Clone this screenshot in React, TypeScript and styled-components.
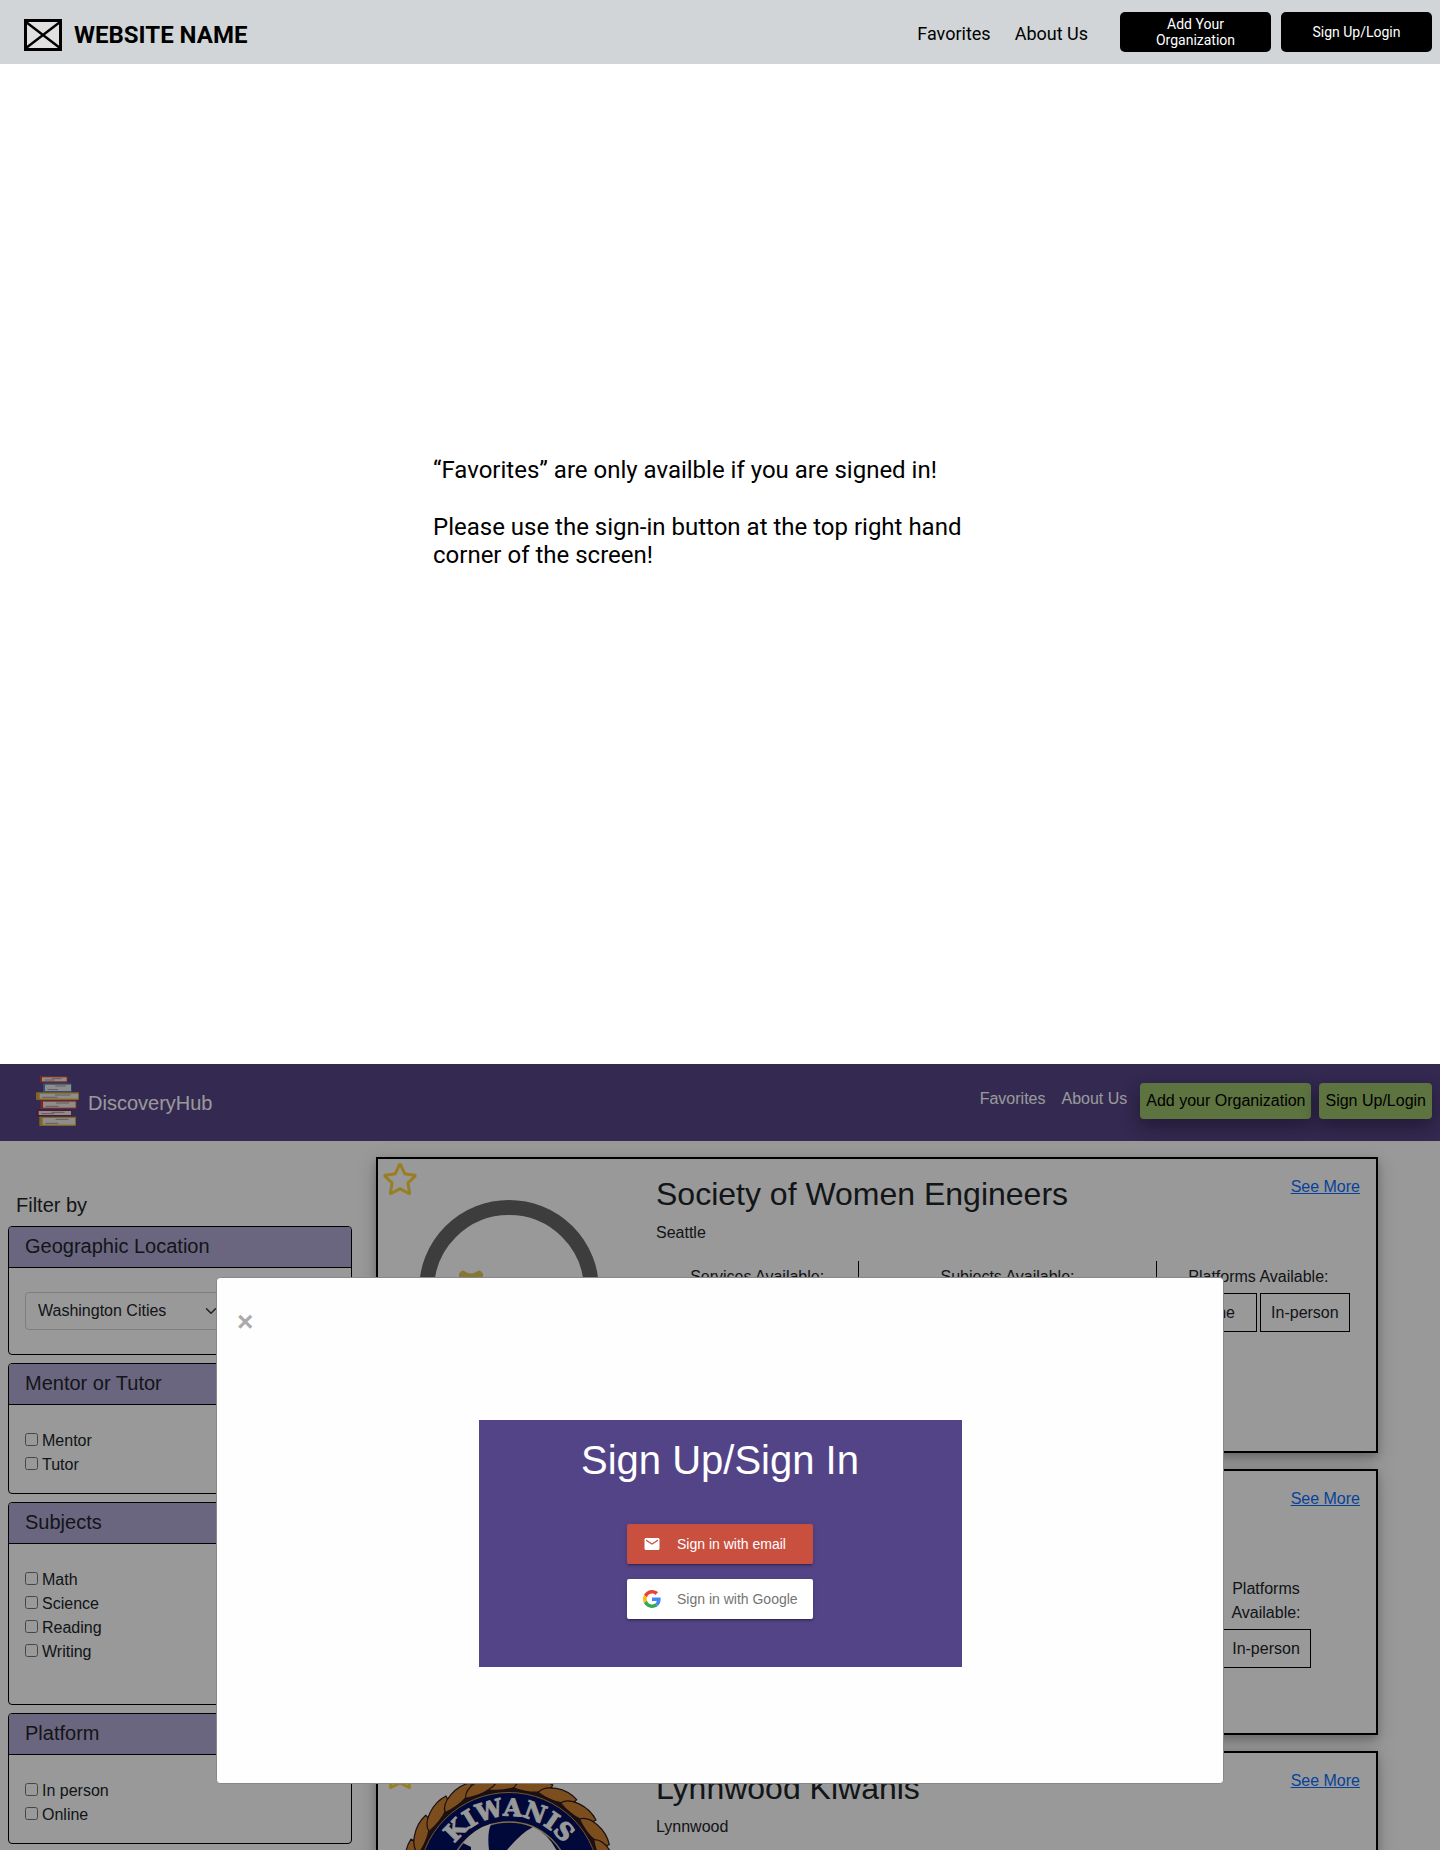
import React from "react";
import styled, { createGlobalStyle } from "styled-components";
import { FaRegStar } from "react-icons/fa";
import { MdEmail } from "react-icons/md";

const GlobalStyle = createGlobalStyle`
  *, *::before, *::after { box-sizing: border-box; }
  body { margin: 0; background: #fff; }
  h1, h2, h3, p { margin: 0; font-weight: 400; }
  button, select { font-family: inherit; }
`;

const Page = styled.div`
  display: flex;
  flex-direction: column;
  min-height: 100vh;
`;

/* ---------- Wireframe: signed-out favorites ---------- */

const Wireframe = styled.section`
  font-family: Roboto, "Liberation Sans", sans-serif;
  color: #000;
`;

const WireHeader = styled.header`
  display: flex;
  align-items: center;
  justify-content: space-between;
  height: 64px;
  padding: 0 8px 0 24px;
  background: #d1d5d7;
`;

const WireBrand = styled.div`
  display: flex;
  align-items: center;
  gap: 12px;
  padding-top: 6px;
  font-size: 24px;
  line-height: 32px;
  font-weight: 700;
`;

const WireNav = styled.nav`
  display: flex;
  align-items: center;
  gap: 24px;
`;

const WireLink = styled.a`
  padding-top: 4px;
  font-size: 18px;
  line-height: 20px;
  color: #000;
  text-decoration: none;
`;

const WireButtons = styled.div`
  display: flex;
  gap: 10px;
  margin-left: 8px;
`;

const WireButton = styled.button`
  width: 151px;
  height: 40px;
  padding: 0 24px;
  border: 0;
  border-radius: 5px;
  background: #000;
  color: #fff;
  font-size: 14px;
  line-height: 16px;
`;

const Notice = styled.div`
  display: flex;
  flex-direction: column;
  gap: 29px;
  max-width: 574px;
  margin: 0 auto;
  padding: 392px 0 495px;
  font-size: 24px;
  line-height: 28px;
`;

/* ---------- DiscoveryHub ---------- */

const Hub = styled.section`
  position: relative;
  flex: 1 0 786px;
  height: 786px;
  overflow: hidden;
  background: #fff;
  color: #212529;
  font-family: "Liberation Sans", Arial, sans-serif;
  font-size: 16px;
  line-height: 24px;
`;

const HubHeader = styled.header`
  display: flex;
  align-items: center;
  justify-content: space-between;
  height: 77px;
  padding: 0 8px 4px 36px;
  background: #564587;
`;

const HubBrand = styled.div`
  display: flex;
  align-items: center;
  gap: 9px;
  color: #fff;
  font-size: 20px;
  line-height: 30px;
`;

const HubName = styled.span`
  padding-top: 4px;
`;

const HubNav = styled.nav`
  display: flex;
  align-items: flex-start;
  gap: 16px;
`;

const HubLink = styled.a`
  padding-top: 4px;
  color: #fff;
  text-decoration: none;
`;

const HubButtons = styled.div`
  display: flex;
  gap: 8px;
  margin-left: -3px;
`;

const HubButton = styled.button`
  padding: 6px;
  border: 0;
  border-radius: 4px;
  background: #9bc06b;
  color: #000;
  font-size: 16px;
  line-height: 24px;
  box-shadow: 0 8px 16px rgba(0, 0, 0, 0.2), 0 6px 20px rgba(0, 0, 0, 0.19);
`;

const Columns = styled.div`
  display: grid;
  grid-template-columns: 1fr 3fr;
`;

const Sidebar = styled.aside`
  display: flex;
  flex-direction: column;
  gap: 8px;
  padding: 51px 8px 0;
`;

const SidebarTitle = styled.h2`
  padding: 0 8px;
  font-size: 20px;
  line-height: 26px;
`;

const Panel = styled.section`
  border: 1px solid #000;
  border-radius: 4px;
  overflow: hidden;
`;

const PanelTitle = styled.h3`
  padding: 7px 16px 9px;
  border-bottom: 1px solid #000;
  background: #b2aad5;
  font-size: 20px;
  line-height: 24px;
`;

const PanelBody = styled.div<{ $bottom: number }>`
  padding: 24px 16px ${(p) => p.$bottom}px;
`;

const CheckLabel = styled.label`
  display: block;

  input {
    width: 13px;
    height: 13px;
    margin: 0 4px 0 0;
  }
`;

const CitySelect = styled.select`
  display: block;
  width: 207px;
  height: 38px;
  padding: 6px 36px 6px 12px;
  appearance: none;
  border: 1px solid #ced4da;
  border-radius: 4px;
  background: #fff
    url("data:image/svg+xml,%3Csvg xmlns='http://www.w3.org/2000/svg' viewBox='0 0 16 16'%3E%3Cpath fill='none' stroke='%23343a40' stroke-linecap='round' stroke-linejoin='round' stroke-width='2' d='M2 5l6 6 6-6'/%3E%3C/svg%3E")
    no-repeat right 12px center / 16px 12px;
  color: #212529;
  font-size: 16px;
  line-height: 24px;
`;

const Results = styled.main`
  display: flex;
  flex-direction: column;
  gap: 16px;
  padding: 16px 62px 16px 16px;
`;

const Card = styled.article<{ $height: number }>`
  position: relative;
  display: flex;
  min-height: ${(p) => p.$height}px;
  border: 2px solid #000;
  background: #fff;
  box-shadow: 0 4px 8px rgba(0, 0, 0, 0.2), 0 6px 20px rgba(0, 0, 0, 0.19);
`;

const FavoriteButton = styled.button`
  position: absolute;
  top: 2px;
  left: 4px;
  display: flex;
  padding: 0;
  border: 0;
  background: none;
  color: #ffd43b;
  font-size: 36px;
`;

const LogoColumn = styled.div<{ $top: number }>`
  display: flex;
  flex: 0 0 278px;
  justify-content: center;
  align-items: flex-start;
  padding: ${(p) => p.$top}px 16px 0 0;
`;

const Details = styled.div`
  flex: 1;
  padding: 16px 16px 16px 0;
`;

const CardTop = styled.div`
  display: flex;
  align-items: flex-start;
  justify-content: space-between;
  margin-bottom: 8px;
`;

const CardTitle = styled.h2`
  font-size: 32px;
  line-height: 38px;
`;

const MoreLink = styled.a`
  color: #0d6efd;
`;

const Facts = styled.div<{ $compact: boolean }>`
  display: grid;
  grid-template-columns: ${(p) =>
    p.$compact ? "41fr 60fr 100px" : "41fr 60fr 41fr"};
  margin-top: 16px;
  padding-right: ${(p) => (p.$compact ? 44 : 0)}px;
`;

const Fact = styled.div`
  display: flex;
  flex-direction: column;
  align-items: center;
  gap: 4px;
  padding: 4px 0 2px;
  text-align: center;

  &:not(:last-child) {
    border-right: 1px solid #000;
  }
`;

const Tags = styled.div`
  display: flex;
  gap: 3px;
`;

const Tag = styled.span`
  width: 90px;
  padding: 7px 0 6px;
  border: 1px solid #000;
`;

const Overlay = styled.div`
  position: absolute;
  inset: 0;
  padding-top: 213px;
  background: rgba(0, 0, 0, 0.4);
`;

const Modal = styled.div`
  width: 70%;
  margin: 0 auto;
  padding: 20px 20px 116px;
  border: 1px solid #888;
  border-radius: 4px;
  background: #fefefe;
`;

const CloseButton = styled.button`
  display: block;
  margin-bottom: 74px;
  padding: 0;
  border: 0;
  background: none;
  color: #aaa;
  font-size: 28px;
  line-height: 48px;
  font-weight: 700;
`;

const SignInBox = styled.div`
  display: flex;
  flex-direction: column;
  align-items: center;
  gap: 40px;
  width: 50%;
  margin: 0 auto;
  padding: 16px 16px 48px;
  background: #534487;
  color: #fff;
`;

const SignInTitle = styled.h1`
  font-size: 40px;
  line-height: 48px;
`;

const Providers = styled.div`
  display: flex;
  flex-direction: column;
  gap: 15px;
`;

const ProviderButton = styled.button<{ $bg: string; $color: string }>`
  display: flex;
  align-items: center;
  gap: 16px;
  width: 186px;
  height: 40px;
  padding: 0 16px;
  border: 0;
  border-radius: 2px;
  background: ${(p) => p.$bg};
  color: ${(p) => p.$color};
  font-size: 14px;
  line-height: 16px;
  font-weight: 500;
  white-space: nowrap;
  box-shadow: 0 2px 2px rgba(0, 0, 0, 0.14), 0 3px 1px -2px rgba(0, 0, 0, 0.2),
    0 1px 5px rgba(0, 0, 0, 0.12);

  svg {
    flex: none;
  }
`;

/* ---------- Drawings ---------- */

const PlaceholderLogo = () => (
  <svg width="38" height="32" viewBox="0 0 38 32" aria-hidden="true">
    <rect x="1.5" y="1.5" width="35" height="29" fill="#e0e0e0" stroke="#000" strokeWidth="3" />
    <path d="M2 3L36 29M36 3L2 29" stroke="#000" strokeWidth="2.4" />
  </svg>
);

const books = [
  { x: 12, y: 0, w: 83, h: 20, c: "#c8443c", px: 18, pw: 74 },
  { x: 21, y: 22, w: 86, h: 27, c: "#4c86c0", px: 27, pw: 78 },
  { x: 0, y: 49, w: 129, h: 23, c: "#d8ab38", px: 11, pw: 115 },
  { x: 13, y: 73, w: 109, h: 26, c: "#c8443c", px: 21, pw: 98 },
  { x: 0, y: 101, w: 106, h: 20, c: "#77305f", px: 8, pw: 97 },
  { x: 10, y: 122, w: 110, h: 28, c: "#d8ab38", px: 20, pw: 97 },
];

const BooksLogo = () => (
  <svg width="43" height="50" viewBox="0 0 129 150" aria-hidden="true">
    {books.map((b) => (
      <g key={b.y}>
        <rect x={b.x} y={b.y} width={b.w} height={b.h} rx="2" fill={b.c} />
        <rect x={b.px} y={b.y + 4} width={b.pw} height={b.h - 8} fill="#efece8" />
        <path
          d={`M${b.px + 8} ${b.y + b.h - 8}h${b.pw * 0.4}M${b.px + b.pw * 0.4} ${b.y + 8}h${b.pw * 0.4}`}
          stroke="#96828f"
          strokeWidth="2.4"
        />
      </g>
    ))}
  </svg>
);

const EngineersLogo = () => (
  <svg width="180" height="180" viewBox="0 0 180 180" role="img" aria-label="Society of Women Engineers logo">
    <circle cx="90" cy="90" r="82.5" fill="none" stroke="#666" strokeWidth="15" />
    <path d="M44 75q8 5 16 0M44 75l16 16M60 75l-16 16" stroke="#dfc75c" strokeWidth="8" strokeLinecap="round" fill="none" />
  </svg>
);

const ropeStrands = Array.from({ length: 24 }, (_, i) => i * 15);

const KiwanisSeal = () => (
  <svg width="218" height="218" viewBox="-109 -109 218 218" role="img" aria-label="Kiwanis seal">
    <circle r="105" fill="#2c1e2c" />
    {ropeStrands.map((a) => (
      <path
        key={a}
        transform={`rotate(${a})`}
        d="M-20 -93C-18 -104 2 -111 17 -106C16 -98 0 -91 -20 -93Z"
        fill="#cf8331"
        stroke="#2c1a20"
        strokeWidth="1.2"
      />
    ))}
    <circle r="92" fill="#000f62" stroke="#2c1a20" strokeWidth="3" />
    <circle r="90.5" fill="none" stroke="#c09058" strokeWidth="1" />
    <circle r="61" fill="#000f62" stroke="#d8b878" strokeWidth="1.4" />
    <path
      d="M-46 -40Q-34 -55 -18 -59Q-22 -50 -20 -33V45H-38V-36ZM24 -56Q12 -50 -2 -33L-12 -12L18 45H46L14 -14L28 -30H49Q40 -49 24 -56Z"
      fill="#fff"
    />
    <path id="seal-arc" d="M-67 0A67 67 0 0 1 67 0" fill="none" />
    <text
      fill="#fff"
      stroke="#fff"
      strokeWidth="1"
      fontFamily="'DejaVu Serif', serif"
      fontWeight="700"
      fontSize="24"
      textAnchor="middle"
    >
      <textPath href="#seal-arc" startOffset="50%">
        KIWANIS
      </textPath>
    </text>
  </svg>
);

const GoogleLogo = () => (
  <svg width="18" height="18" viewBox="0 0 48 48" aria-hidden="true">
    <path fill="#EA4335" d="M24 9.5c3.54 0 6.71 1.22 9.21 3.6l6.85-6.85C35.9 2.38 30.47 0 24 0 14.62 0 6.51 5.38 2.56 13.22l7.98 6.19C12.43 13.72 17.74 9.5 24 9.5z" />
    <path fill="#4285F4" d="M46.98 24.55c0-1.57-.15-3.09-.38-4.55H24v9.02h12.94c-.58 2.96-2.26 5.48-4.78 7.18l7.73 6c4.51-4.18 7.09-10.36 7.09-17.65z" />
    <path fill="#FBBC05" d="M10.53 28.59c-.48-1.45-.76-2.99-.76-4.59s.27-3.14.76-4.59l-7.98-6.19C.92 16.46 0 20.12 0 24c0 3.88.92 7.54 2.56 10.78l7.97-6.19z" />
    <path fill="#34A853" d="M24 48c6.48 0 11.93-2.13 15.89-5.81l-7.73-6c-2.15 1.45-4.92 2.3-8.16 2.3-6.26 0-11.57-4.22-13.47-9.91l-7.98 6.19C6.51 42.62 14.62 48 24 48z" />
  </svg>
);

/* ---------- Content ---------- */

const filters = [
  { title: "Mentor or Tutor", options: ["Mentor", "Tutor"], bottom: 16 },
  { title: "Subjects", options: ["Math", "Science", "Reading", "Writing"], bottom: 40 },
  { title: "Platform", options: ["In person", "Online"], bottom: 16 },
];

interface Organization {
  name: string;
  city: string;
  height: number;
  logoTop: number;
  logo?: React.ReactNode;
  compact?: boolean;
  platforms?: string[];
}

const organizations: Organization[] = [
  {
    name: "Society of Women Engineers",
    city: "Seattle",
    height: 296,
    logoTop: 41,
    logo: <EngineersLogo />,
    platforms: ["Online", "In-person"],
  },
  { name: "", city: "\u00a0", height: 266, logoTop: 16, compact: true, platforms: ["In-person"] },
  {
    name: "Lynnwood Kiwanis",
    city: "Lynnwood",
    height: 266,
    logoTop: 21,
    logo: <KiwanisSeal />,
  },
];

const OrganizationCard = ({ org }: { org: Organization }) => (
  <Card $height={org.height}>
    <LogoColumn $top={org.logoTop}>{org.logo}</LogoColumn>
    <FavoriteButton type="button" aria-label="Add to favorites">
      <FaRegStar />
    </FavoriteButton>
    <Details>
      <CardTop>
        <CardTitle>{org.name || "\u00a0"}</CardTitle>
        <MoreLink href="#more">See More</MoreLink>
      </CardTop>
      <p>{org.city}</p>
      {org.platforms && (
        <Facts $compact={!!org.compact}>
          <Fact>Services Available:</Fact>
          <Fact>Subjects Available:</Fact>
          <Fact>
            <span>Platforms Available:</span>
            <Tags>
              {org.platforms.map((name) => (
                <Tag key={name}>{name}</Tag>
              ))}
            </Tags>
          </Fact>
        </Facts>
      )}
    </Details>
  </Card>
);

export default function App() {
  return (
    <Page>
      <GlobalStyle />
      <Wireframe>
        <WireHeader>
          <WireBrand>
            <PlaceholderLogo />
            WEBSITE NAME
          </WireBrand>
          <WireNav>
            <WireLink href="#favorites">Favorites</WireLink>
            <WireLink href="#about">About Us</WireLink>
            <WireButtons>
              <WireButton type="button">Add Your Organization</WireButton>
              <WireButton type="button">Sign Up/Login</WireButton>
            </WireButtons>
          </WireNav>
        </WireHeader>
        <Notice>
          <p>“Favorites” are only availble if you are signed in!</p>
          <p>Please use the sign-in button at the top right hand corner of the screen!</p>
        </Notice>
      </Wireframe>

      <Hub>
        <HubHeader>
          <HubBrand>
            <BooksLogo />
            <HubName>DiscoveryHub</HubName>
          </HubBrand>
          <HubNav>
            <HubLink href="#favorites">Favorites</HubLink>
            <HubLink href="#about">About Us</HubLink>
            <HubButtons>
              <HubButton type="button">Add your Organization</HubButton>
              <HubButton type="button">Sign Up/Login</HubButton>
            </HubButtons>
          </HubNav>
        </HubHeader>
        <Columns>
          <Sidebar>
            <SidebarTitle>Filter by</SidebarTitle>
            <Panel>
              <PanelTitle>Geographic Location</PanelTitle>
              <PanelBody $bottom={24}>
                <CitySelect aria-label="Geographic Location">
                  <option>Washington Cities</option>
                </CitySelect>
              </PanelBody>
            </Panel>
            {filters.map((filter) => (
              <Panel key={filter.title}>
                <PanelTitle>{filter.title}</PanelTitle>
                <PanelBody $bottom={filter.bottom}>
                  {filter.options.map((option) => (
                    <CheckLabel key={option}>
                      <input type="checkbox" />
                      {option}
                    </CheckLabel>
                  ))}
                </PanelBody>
              </Panel>
            ))}
          </Sidebar>
          <Results>
            {organizations.map((org, i) => (
              <OrganizationCard key={i} org={org} />
            ))}
          </Results>
        </Columns>
        <Overlay>
          <Modal role="dialog" aria-label="Sign Up/Sign In">
            <CloseButton type="button" aria-label="Close">
              ×
            </CloseButton>
            <SignInBox>
              <SignInTitle>Sign Up/Sign In</SignInTitle>
              <Providers>
                <ProviderButton type="button" $bg="#c9503f" $color="#fff">
                  <MdEmail size={18} />
                  Sign in with email
                </ProviderButton>
                <ProviderButton type="button" $bg="#fff" $color="#757575">
                  <GoogleLogo />
                  Sign in with Google
                </ProviderButton>
              </Providers>
            </SignInBox>
          </Modal>
        </Overlay>
      </Hub>
    </Page>
  );
}
